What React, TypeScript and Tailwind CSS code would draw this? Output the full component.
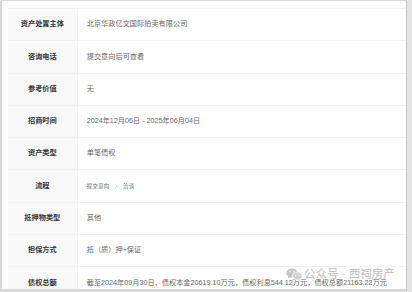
import React from 'react';

interface InfoRow {
  label: string;
  value: React.ReactNode;
}

const FONT = '"Liberation Sans", "Noto Sans CJK SC", sans-serif';

const FlowSteps = () => (
  <div className="flex items-center text-[5.6px] text-[#666]">
    <span>提交意向</span>
    <svg width="4" height="6" viewBox="0 0 4 6" className="mx-[5px]">
      <polyline points="0.8,0.6 3.2,3 0.8,5.4" fill="none" stroke="#bbb" strokeWidth="0.7" />
    </svg>
    <span>洽谈</span>
  </div>
);

const rows: InfoRow[] = [
  { label: '资产处置主体', value: '北京华政亿文国际拍卖有限公司' },
  { label: '咨询电话', value: '提交意向后可查看' },
  { label: '参考价值', value: '无' },
  { label: '招商时间', value: '2024年12月06日 - 2025年06月04日' },
  { label: '资产类型', value: '单笔债权' },
  { label: '流程', value: <FlowSteps /> },
  { label: '抵押物类型', value: '其他' },
  { label: '担保方式', value: '抵（质）押+保证' },
  {
    label: '债权总额',
    value: '截至2024年09月30日，债权本金20619.10万元，债权利息544.12万元，债权总额21163.22万元',
  },
];

const WechatIcon = () => (
  <svg width="17" height="13" viewBox="0 0 17 13">
    <ellipse cx="6" cy="5" rx="5.6" ry="4.6" fill="#c4c4c4" />
    <path d="M2.6 8.4 L2 10.6 L4.6 9.2 Z" fill="#c4c4c4" />
    <ellipse cx="11.4" cy="8" rx="4.8" ry="4" fill="#d2d2d2" stroke="#fff" strokeWidth="0.8" />
    <path d="M14 11.2 L14.8 12.8 L12.6 11.8 Z" fill="#d2d2d2" />
    <circle cx="4" cy="3.8" r="0.7" fill="#fff" />
    <circle cx="7.8" cy="3.8" r="0.7" fill="#fff" />
    <circle cx="9.8" cy="7.4" r="0.6" fill="#fff" />
    <circle cx="13" cy="7.4" r="0.6" fill="#fff" />
  </svg>
);

export default function App() {
  return (
    <div className="flex w-[412px] h-[292px] bg-[#d8d8d8] overflow-hidden" style={{ fontFamily: FONT }}>
      <div className="relative ml-[2px] mt-[1px] w-[404px] h-[288px] bg-white overflow-hidden pl-[6px] pt-[7px]">
        <div className="border-t border-[#f1f1f1]">
          {rows.map((row) => (
            <div
              key={row.label}
              className="grid grid-cols-[69.7px_1fr] h-[32.3px] border-b border-[#f1f1f1]"
            >
              <div className="flex items-center justify-center bg-[#f8f8f8] border-r border-[#efefef] text-[7.2px] font-semibold text-[#333]">
                {row.label}
              </div>
              <div className="flex items-center pl-[9px] text-[7.2px] text-[#666] whitespace-nowrap">
                {row.value}
              </div>
            </div>
          ))}
        </div>

        {/* watermark */}
        <div className="absolute left-[284px] top-[265px] flex items-center gap-[1px] text-[11.5px] text-[#bcbcbc]">
          <WechatIcon />
          <span>公众号 · 西祠房产</span>
        </div>
      </div>
      <div className="w-[6px] h-full border-l border-[#c6c6c6] bg-[#e4e4e4]" />
    </div>
  );
}
